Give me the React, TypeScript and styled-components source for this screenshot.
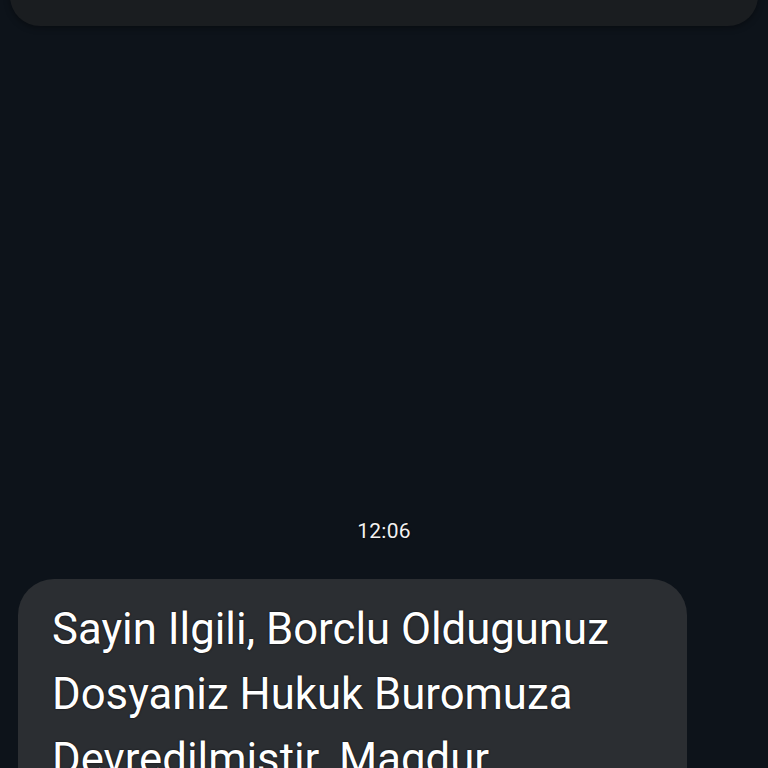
import React from "react";
import styled, { createGlobalStyle } from "styled-components";

const Global = createGlobalStyle`
  html, body { margin: 0; padding: 0; background: #0d131a; }
  body { font-family: "Roboto", "Noto Sans", sans-serif; }
`;

const Screen = styled.div`
  width: 768px;
  height: 768px;
  overflow: hidden;
  background: #0d131a;
  display: flex;
  flex-direction: column;
  align-items: stretch;
`;

const TopCard = styled.div`
  margin: -40px 10px 0 10px;
  height: 66px;
  background: #1a1d20;
  border-radius: 0 0 30px 30px;
  box-shadow: 0 2px 6px rgba(0, 0, 0, 0.35);
  flex-shrink: 0;
`;

const Stamp = styled.div`
  margin-top: 492px;
  text-align: center;
  color: #f2f2f2;
  font-size: 21px;
  line-height: 26px;
  letter-spacing: 0.2px;
  text-shadow: 0 0 2px rgba(0, 0, 0, 0.9);
`;

const Bubble = styled.div`
  margin: 35px 0 0 18px;
  width: 669px;
  box-sizing: border-box;
  background: #2b2e32;
  border-radius: 36px;
  padding: 18px 30px 20px 34px;
  color: #ffffff;
  font-size: 43.7px;
  line-height: 65px;
  text-shadow: 0 0 2px rgba(0, 0, 0, 0.9);
  flex-shrink: 0;
`;

export default function App() {
  return (
    <>
      <Global />
      <Screen>
        <TopCard />
        <Stamp>12:06</Stamp>
        <Bubble>
          Sayin Ilgili, Borclu Oldugunuz Dosyaniz Hukuk Buromuza Devredilmistir. Magdur
          Olmamaniz Icin Lutfen Iletisime Geciniz.
        </Bubble>
      </Screen>
    </>
  );
}
